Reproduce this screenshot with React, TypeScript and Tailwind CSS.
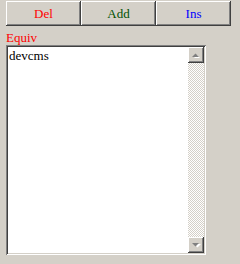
import React from "react";

const raised =
  "shadow-[inset_-1px_-1px_#404040,inset_1px_1px_#ffffff,inset_-2px_-2px_#808080,inset_2px_2px_#d4d0c8]";

const ActionButton = ({ text, color }: { text: string; color: string }) => (
  <button
    className={`w-[75px] h-[25px] bg-[#d4d0c8] text-[13px] leading-none flex items-center justify-center ${raised} ${color}`}
  >
    {text}
  </button>
);

const ScrollArrow = ({ up }: { up?: boolean }) => (
  <div className={`w-[16px] h-[16px] bg-[#d4d0c8] relative ${raised}`}>
    <svg width="16" height="16" className="absolute left-0 top-0">
      {up ? (
        <>
          <polygon points="5,10 11,10 8,7" fill="#ffffff" transform="translate(1,1)" />
          <polygon points="4,10 11,10 7.5,6.5" fill="#808080" />
        </>
      ) : (
        <>
          <polygon points="5,6 12,6 8.5,9.5" fill="#ffffff" transform="translate(1,1)" />
          <polygon points="4,6 11,6 7.5,9.5" fill="#808080" />
        </>
      )}
    </svg>
  </div>
);

export default function App() {
  const items = ["devcms"];
  return (
    <div className="w-[240px] h-[264px] bg-[#d4d0c8] font-['Liberation_Serif',serif] pt-[1px] pl-[6px]">
      <div className="flex">
        <ActionButton text="Del" color="text-[#ff0000]" />
        <ActionButton text="Add" color="text-[#005000]" />
        <ActionButton text="Ins" color="text-[#0000ff]" />
      </div>
      <div className="mt-[4px] h-[15px] text-[13px] leading-[15px] text-[#ff0000]">Equiv</div>
      <div className="w-[200px] h-[210px] bg-white p-[2px] flex shadow-[inset_1px_1px_#808080,inset_-1px_-1px_#ffffff,inset_2px_2px_#404040,inset_-2px_-2px_#d4d0c8]">
        <div className="flex-1 pl-[1px] pt-[1px] text-[13px] leading-[15px] text-black">
          {items.map((item) => (
            <div key={item}>{item}</div>
          ))}
        </div>
        <div className="w-[16px] flex flex-col">
          <ScrollArrow up />
          <div className="flex-1 bg-[repeating-conic-gradient(#d4d0c8_0_25%,#ffffff_0_50%)] bg-[length:2px_2px]" />
          <ScrollArrow />
        </div>
      </div>
    </div>
  );
}
